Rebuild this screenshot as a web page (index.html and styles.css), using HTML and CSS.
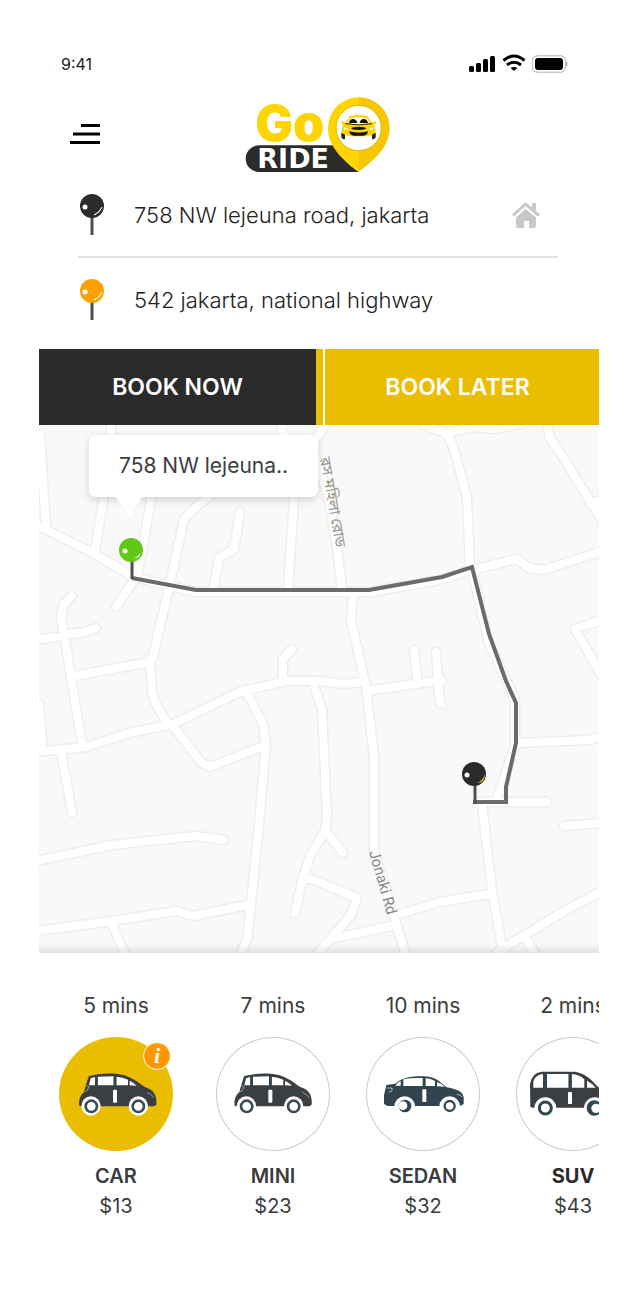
FILE: index.html
```html
<!DOCTYPE html>
<html lang="en">
<head>
<meta charset="utf-8">
<meta name="viewport" content="width=device-width, initial-scale=1">
<title>Go Ride</title>
<link rel="stylesheet" href="styles.css">
</head>
<body>
<main class="app">
  <div class="status">
    <time class="clock">9:41</time>
    <svg class="status-icons" viewBox="0 0 100 20" aria-hidden="true">
      <g fill="#000">
        <rect x="0" y="12" width="5" height="6" rx="1.5"/>
        <rect x="7" y="9" width="5" height="9" rx="1.5"/>
        <rect x="14" y="5" width="5" height="13" rx="1.5"/>
        <rect x="21" y="2" width="5" height="16" rx="1.5"/>
        <rect x="66" y="4" width="28" height="12" rx="3"/>
        <path d="M41.500 14Q45 12 48.500 14L45 17Z"/>
        <path d="M97 7.500q3 2.500 0 5z" fill="#999"/>
      </g>
      <g fill="none" stroke="#000" stroke-width="3">
        <path d="M34.500 6.500Q45-2.500 55.500 6.500M38 11Q45 5.500 52 11"/>
        <rect x="63.500" y="1.700" width="33" height="16.600" rx="5" stroke="#c9c9c9" stroke-width="1.400"/>
      </g>
    </svg>
  </div>

  <header class="header">
    <button class="menu" type="button" aria-label="Menu">
      <svg class="menu-icon" viewBox="0 0 30 20" fill="none" stroke="#000" stroke-width="3" aria-hidden="true">
        <path d="M11 1.500H30M3 10H30M0 18.500H30"/>
      </svg>
    </button>
    <svg class="logo" viewBox="39 24 450 240" role="img" aria-label="Go Ride">
      <path d="M84 178H310Q335 226 383 258H84a40 40 0 0 1 0-80z" fill="#2b2b2b"/>
      <path d="M383 34a92 92 0 0 0-92 92c0 55 42 95 92 132z" fill="#ffd400"/>
      <path d="M382 34a92 92 0 0 1 94 92c0 55-44 95-94 132z" fill="#f6c600"/>
      <circle cx="383" cy="126" r="68" fill="#fff" stroke="#e0b400" stroke-width="3"/>
      <g>
        <path d="M357 96Q383 82 408 96M343 116l16-24h48l16 24" fill="none" stroke="#ffd400" stroke-width="5"/>
        <path d="M354 111q2-12 12-12t13 12zM386 111q2-12 12-12t13 12z" fill="#111"/>
        <path d="M330 105l14 5q39 8 78 0l13-5v6l-6 5q6 8 5 40h-9l-3-8q-39 7-78 0l-3 8h-9q-3-30 5-40l-7-5z" fill="#ffd400"/>
        <path d="M343 113q40 7 80 0" fill="none" stroke="#222" stroke-width="3"/>
        <path d="M331 140l11 6v13q-10 2-11-6zM434 140l-11 6v13q10 2 11-6z" fill="#222"/>
        <ellipse cx="383" cy="127" rx="22" ry="5" fill="#111"/>
        <path d="M355 136q28 7 56 0q-2 13-14 13h-28q-12 0-14-13z" fill="#111"/>
        <path d="M339 123l15 6-15 3zM427 123l-15 6 15 3z" fill="#fff"/>
      </g>
      <text class="logo-go" x="73" y="166">Go</text>
      <text class="logo-ride" x="79" y="247">RIDE</text>
    </svg>
  </header>

  <form class="route-form">
    <div class="stop">
      <label class="stop-pin" for="pickup" aria-label="Pickup">
        <svg class="pin-icon" viewBox="0 0 24 42" aria-hidden="true">
          <path d="M12 22v19" stroke="#4a5055" stroke-width="3"/>
          <circle cx="12" cy="12" r="12" fill="#2b2b2b"/>
          <circle cx="5" cy="13" r="2.500" fill="#fff"/>
          <path d="M14 21Q20 19 22 13Q20 18 14 21z" fill="#fff" stroke="#fff" stroke-width=".7"/>
        </svg>
      </label>
      <input class="stop-input" id="pickup" type="text" value="758 NW lejeuna road, jakarta">
      <button class="home" type="button" aria-label="Home address">
        <svg class="home-icon" viewBox="0 0 30 28" aria-hidden="true">
          <path d="M2 14.500L14.500 3 28 14.500" fill="none" stroke="#c8c8c8" stroke-width="3"/>
          <path d="M21 2h4v8l-4-3.500z" fill="#c8c8c8"/>
          <path d="M5 16.500l9.500-8.500L25 16.500V25q0 2-2 2h-5v-7h-5v7H7q-2 0-2-2z" fill="#c8c8c8"/>
        </svg>
      </button>
    </div>
    <div class="stop">
      <label class="stop-pin" for="dropoff" aria-label="Destination">
        <svg class="pin-icon" viewBox="0 0 24 42" aria-hidden="true">
          <path d="M12 22v19" stroke="#4a5055" stroke-width="3"/>
          <circle cx="12" cy="12" r="12" fill="#ffa000"/>
          <circle cx="5" cy="13" r="2.500" fill="#fff"/>
          <path d="M14 21Q20 19 22 13Q20 18 14 21z" fill="#fff" stroke="#fff" stroke-width=".7"/>
        </svg>
      </label>
      <input class="stop-input" id="dropoff" type="text" value="542 jakarta, national highway">
    </div>
  </form>

  <div class="booking">
    <button class="book book-now" type="button">BOOK NOW</button>
    <button class="book book-later" type="button">BOOK LATER</button>
  </div>

  <section class="map" aria-label="Route map">
    <svg class="map-canvas" viewBox="0 1 560 528" preserveAspectRatio="xMidYMid slice">
      <defs>
        <path id="roads" d="M-3 102L8 106 54 129 91 151 110 157 157 168H332L400 156 433 146 478 135 490 144 505 146 563 127
          M1 10L7 104M72-2V40L65 72 56 127M113 70L106 110 98 152 77 183M173 70L158 82 145 95 132 155 114 232 111 238 113 266 115 276 128 299 134 302 162 338 171 343 227 321
          M201 88L195 125 180 134 175 163M241-2L250 30 256 60 249 165
          M33 172L25 180 22 193 28 227 34 266 43 319M-3 216L45 208 57 204M35 252L111 238M253 225L244 235V257
          M-3 328L47 323 90 309 134 300 203 267 248 257 280 257 305 260 323 258M328 267L403 256
          M375 226L379 260M397 228L400 270 402 280M278 35L290 75 298 123 303 165M288-2L278 14
          M314 170L312 196 327 263 335 332V428L355 492 367 532M385 0L391 4 407 9 433 3 457 5 490-2M407 9L414 22 428 73 431 145
          M508-2L511 14 520 27 563 96M551 79L563 76M563 196L536 205 563 252M434 150L450 220 472 266 476 276V322L457 377
          M477 319L551 316 563 312M440 378H508M525 402L563 399M443 380L453 466 464 528M563 467L527 486 466 523 452 534M357 491L401 478 450 470M487 514L497 532
          M356 501L297 514M264 453L280 458 318 474 312 491 276 533M274 258L283 285 288 393 286 407 272 430 264 453 256 489M288 409L304 429
          M208 269L224 300 227 320 220 400 212 480 208 515 200 534M-3 437L73 421 157 412 185 416M-3 507L73 497 137 487 155 492 212 480M73 500L87 532
          M22 328L33 388M0 280L4 327"/>
      </defs>
      <g fill="none" stroke-linecap="round" stroke-linejoin="round">
        <use href="#roads" stroke="#eeeeee" stroke-width="11"/>
        <use href="#roads" stroke="#fff" stroke-width="8"/>
      </g>
      <text class="road-name" transform="translate(330 428) rotate(74)">Jonaki Rd</text>
      <text class="road-name road-name-bn" lang="bn" transform="translate(281 34) rotate(80)">রস মহিলা রোড</text>
      <path d="M93 154L157 166H330L403 153 433 143 450 210 467 257 477 279V319L467 363V378H434" fill="none" stroke="#6b6b6b" stroke-width="4"/>
      <g>
        <path d="M93 136V155" stroke="#4a5055" stroke-width="3"/>
        <circle cx="92" cy="126" r="12" fill="#60c915"/>
        <circle cx="86" cy="127" r="2.500" fill="#fff"/>
        <path d="M95 134Q100 132 101 129Q102 134 95 134z" fill="#fff"/>
      </g>
      <g>
        <path d="M436 360V380" stroke="#4a5055" stroke-width="3"/>
        <circle cx="435" cy="350" r="12" fill="#2b2b2b"/>
        <circle cx="428" cy="351" r="2.500" fill="#fff"/>
        <path d="M438 359Q443 358 446 350Q446 359 438 359z" fill="#e9bd1c"/>
      </g>
    </svg>
    <div class="callout">758 NW lejeuna..</div>
  </section>

  <section class="rides" aria-label="Ride types">
    <button class="ride ride-selected" type="button">
      <span class="ride-time">5 mins</span>
      <span class="ride-disc">
        <svg class="ride-icon" viewBox="0 0 342 342" aria-hidden="true">
          <g id="hatchback" transform="translate(58 108)">
            <path d="M3 98C0 80 8 64 17 58L24 32 31 10C65-1 125-3 156 14 175 22 188 34 200 42 226 51 236 65 234 95L227 100H8z" fill="#3b3f42"/>
            <path d="M37 16L50 12V37H32zM58 11L106 10V37H58zM114 11Q133 12 149 20V37H114zM154 23Q166 29 175 38L154 37z" fill="#fff"/>
            <path d="M24 38l8 3-6 12-7 3M206 58q15 6 20 16" stroke="#8f9da5" stroke-width="3" fill="none"/>
            <path d="M50 12h8v26h-8zM106 10h8v27h-8z" fill="#2e4451"/>
            <rect x="104" y="50" width="12" height="39" rx="3" fill="#fff"/>
            <circle cx="38" cy="99" r="29" fill="#fff"/><circle cx="180" cy="99" r="29" fill="#fff"/>
            <g fill="#fff" stroke="#3b4d58" stroke-width="8"><circle cx="39" cy="100" r="17"/><circle cx="180" cy="100" r="17"/></g>
          </g>
        </svg>
        <span class="info">i</span>
      </span>
      <span class="ride-name">CAR</span>
      <span class="ride-price">$13</span>
    </button>
    <button class="ride" type="button">
      <span class="ride-time">7 mins</span>
      <span class="ride-disc">
        <svg class="ride-icon" viewBox="0 0 342 342" aria-hidden="true"><use href="#hatchback" x="-5"/></svg>
      </span>
      <span class="ride-name">MINI</span>
      <span class="ride-price">$23</span>
    </button>
    <button class="ride" type="button">
      <span class="ride-time">10 mins</span>
      <span class="ride-disc">
        <svg class="ride-icon" viewBox="0 0 342 342" aria-hidden="true">
          <g transform="translate(52 115)">
            <path d="M2 86V60L9 29 36 25C55 8 78 3 120 3 158 4 165 17 190 36 224 42 240 50 241 68V86L230 92H12z" fill="#304550"/>
            <path d="M36 31Q43 21 52 16V31zM60 12Q82 7 118 8V32H60zM127 8Q142 9 155 17V32H127zM161 20Q172 24 185 34L161 33z" fill="#fff"/>
            <path d="M10 38h16v9l-10 4M220 57q13 1 16 8" stroke="#a6b2b8" stroke-width="3" fill="none"/>
            <rect x="117" y="42" width="12" height="38" rx="2" fill="#fff"/>
            <path d="M33 94a31 31 0 0 1 62 0zM168 94a31 31 0 0 1 62 0z" fill="#fff"/>
            <circle cx="65" cy="92" r="19" fill="#304550"/><circle cx="59" cy="91" r="13" fill="#fff"/>
            <circle cx="199" cy="92" r="15" fill="#fff" stroke="#304550" stroke-width="7"/>
          </g>
        </svg>
      </span>
      <span class="ride-name">SEDAN</span>
      <span class="ride-price">$32</span>
    </button>
    <button class="ride" type="button">
      <span class="ride-time">2 mins</span>
      <span class="ride-disc">
        <svg class="ride-icon" viewBox="0 0 342 342" aria-hidden="true">
          <g transform="translate(39 102)">
            <path d="M4 108L3 40Q8 5 38 2H138C172 8 188 27 208 49L244 60V110H12z" fill="#3b3f42"/>
            <path d="M13 50V32Q18 12 42 9V50zM54 9H119V50H54zM128 9Q150 10 166 25V50H128zM174 29Q188 36 200 50H174z" fill="#fff"/>
            <path d="M44 9h10v41H44zM119 9h9v41h-9z" fill="#304550"/>
            <rect x="117" y="63" width="12" height="36" rx="2" fill="#fff"/>
            <path d="M16 112a33 33 0 0 1 66 0zM165 112a33 33 0 0 1 66 0z" fill="#fff"/>
            <circle cx="49" cy="111" r="18" fill="#fff" stroke="#304550" stroke-width="9"/>
            <circle cx="196" cy="111" r="23" fill="#304550"/><circle cx="201" cy="112" r="14" fill="#fff"/>
          </g>
        </svg>
      </span>
      <span class="ride-name ride-name-strong">SUV</span>
      <span class="ride-price">$43</span>
    </button>
  </section>
</main>
</body>
</html>
```
FILE: styles.css
```css
* {
  box-sizing: border-box;
}

body {
  margin: 0;
  padding: 48px 41px 80px 39px;
  background: #fff;
  color: #3a3d40;
  font-family: Inter, "Liberation Sans", sans-serif;
}

button,
input {
  margin: 0;
  padding: 0;
  border: 0;
  background: none;
  color: inherit;
  font: inherit;
}

button {
  cursor: pointer;
}

svg {
  display: block;
}

.status {
  display: flex;
  align-items: center;
  justify-content: space-between;
  height: 32px;
  padding: 0 30px 0 22px;
}

.clock {
  color: #222;
  font-size: 16px;
}

.status-icons {
  width: 100px;
  height: 20px;
}

.header {
  display: grid;
  grid-template-columns: 1fr auto 1fr;
  align-items: center;
  height: 93px;
  padding: 14px 31px 0;
}

.menu {
  justify-self: start;
}

.menu-icon {
  width: 30px;
  height: 20px;
}

.logo {
  width: 150px;
  height: 80px;
}

.logo-go {
  fill: #ffd400;
  font-size: 150px;
  font-weight: 900;
}

.logo-ride {
  fill: #fff;
  font-family: "DejaVu Sans", sans-serif;
  font-size: 81px;
  font-weight: 700;
}

.route-form {
  padding: 0 41px 7px 39px;
}

.stop {
  display: flex;
  align-items: center;
  height: 83px;
}

.stop + .stop {
  height: 86px;
  border-top: 2px solid #e3e3e3;
}

.stop-pin {
  flex: none;
  width: 56px;
  padding-left: 2px;
}

.pin-icon {
  width: 24px;
  height: 42px;
}

.stop-input {
  flex: 1;
  min-width: 0;
  color: #222;
  font-size: 22px;
  font-weight: 300;
}

.home {
  flex: none;
  margin-right: 17px;
}

.home-icon {
  width: 30px;
  height: 28px;
}

.booking {
  display: grid;
  grid-template-columns: 277fr 283fr;
}

.book {
  height: 76px;
  color: #fff;
  font-size: 23px;
  font-weight: 600;
}

.book-now {
  background: #2b2b2b;
}

.book-later {
  background: linear-gradient(90deg, #ebbd00 7px, #fff 7px, #fff 9px, #ebbd00 9px);
}

.map {
  position: relative;
  background: #f9f9f9;
}

.map::after {
  content: "";
  position: absolute;
  inset: auto 0 0;
  height: 9px;
  background: linear-gradient(transparent, rgba(0, 0, 0, 0.1));
}

.map-canvas {
  width: 100%;
  height: auto;
}

.road-name {
  fill: #858585;
  font-family: Roboto, sans-serif;
  font-size: 15px;
}

.road-name-bn {
  fill: #99958c;
  font-family: "Noto Sans Bengali", FreeSans, sans-serif;
}

.callout {
  position: absolute;
  top: 10px;
  left: 50px;
  padding: 0 30px;
  border-radius: 7px;
  background: #fff;
  box-shadow: 0 3px 8px rgba(0, 0, 0, 0.16);
  font-size: 21px;
  line-height: 62px;
}

.callout::after {
  content: "";
  position: absolute;
  top: 100%;
  left: 27px;
  border: 13px solid transparent;
  border-top: 20px solid #fff;
  border-bottom: 0;
}

.rides {
  display: flex;
  gap: 36px;
  padding: 38px 0 0 20px;
  overflow: hidden;
}

.ride {
  display: flex;
  flex: none;
  flex-direction: column;
  align-items: center;
  width: 114px;
  font-size: 20px;
  line-height: 30px;
}

.ride-selected {
  margin-right: 7px;
}

.ride-time {
  font-size: 21px;
}

.ride-disc {
  position: relative;
  width: 114px;
  height: 114px;
  margin: 16px 0 10px;
  border-radius: 50%;
  box-shadow: inset 0 0 0 1px #ccc;
}

.ride-selected .ride-disc {
  background: #ebbd00;
  box-shadow: none;
}

.ride-icon {
  width: 114px;
  height: 114px;
}

.info {
  position: absolute;
  top: 5px;
  right: 2px;
  width: 28px;
  height: 28px;
  border: 1px solid #fff;
  border-radius: 50%;
  background: #ff9800;
  color: #fff;
  font-family: "Liberation Serif", serif;
  font-size: 22px;
  font-style: italic;
  font-weight: 700;
  line-height: 25px;
}

.ride-name {
  font-weight: 600;
}

.ride-name-strong {
  color: #2b2b2b;
  font-weight: 700;
}
```
